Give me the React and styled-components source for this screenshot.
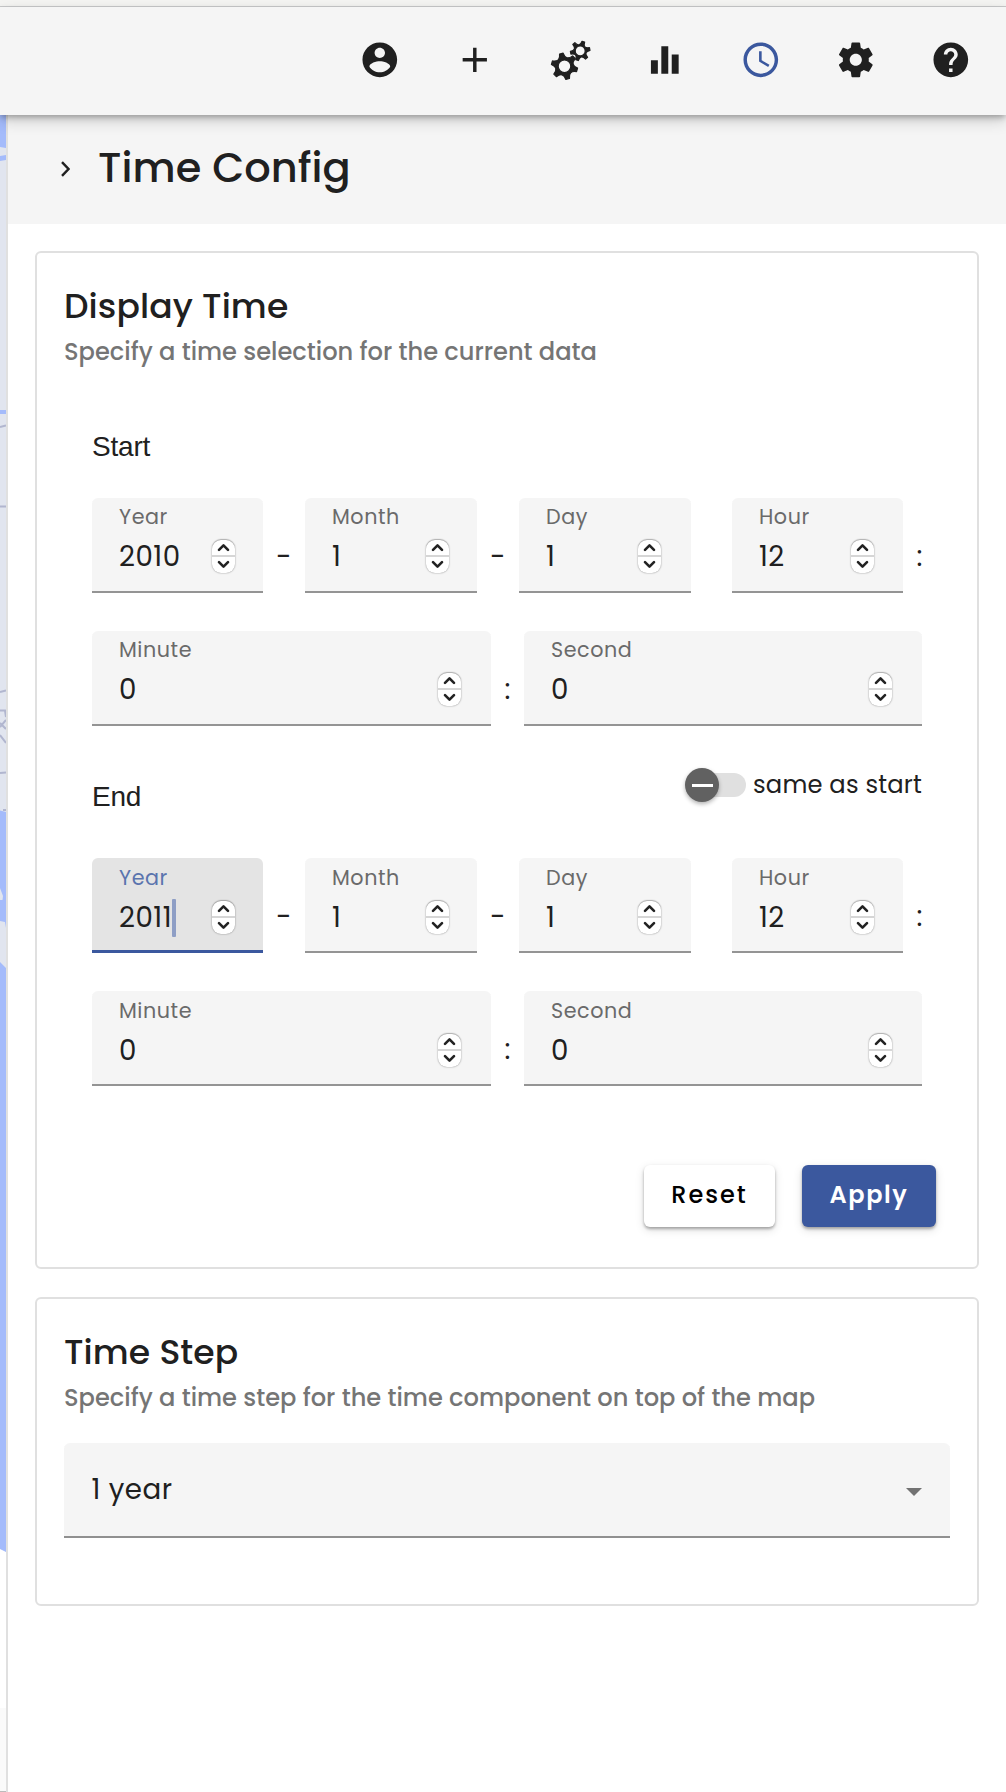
import React from "react";
import styled, { createGlobalStyle, css } from "styled-components";

const sans = `Poppins, Inter, "Liberation Sans", sans-serif`;
const ink = "#202020";
const blue = "#3b589e";

const GlobalStyle = createGlobalStyle`
  *, *::before, *::after { box-sizing: border-box; }
  body {
    margin: 0;
    background: #fff;
    color: ${ink};
    font-family: ${sans};
    -webkit-font-smoothing: antialiased;
  }
`;

const Page = styled.div`
  display: flex;
  flex-direction: column;
  width: 1006px;
  height: 1792px;
  overflow: hidden;
`;

const WindowEdge = styled.div`
  flex: none;
  height: 7px;
  background: #f4f4f2;
  border-bottom: 1px solid #c9cacb;
`;

const Toolbar = styled.header`
  position: relative;
  z-index: 2;
  flex: none;
  display: flex;
  justify-content: flex-end;
  align-items: flex-start;
  gap: 53.7px;
  height: 108px;
  padding: 32px 34.2px 0 0;
  background: #f5f5f5;
  box-shadow: 0 3px 6px -1px rgba(0, 0, 0, 0.3), 0 6px 14px rgba(0, 0, 0, 0.16);
`;

const ToolButton = styled.button`
  display: block;
  width: 41.6px;
  height: 41.6px;
  padding: 0;
  border: 0;
  background: none;
  color: ${(p) => (p.$active ? blue : ink)};
  svg { display: block; overflow: visible; }
`;

const Body = styled.div`
  flex: 1;
  display: flex;
  min-height: 0;
`;

const MapStrip = styled.div`
  flex: none;
  width: 6px;
  svg { display: block; }
`;

const Panel = styled.main`
  flex: 1;
  border-left: 2px solid #e0e0e0;
  background: #fff;
`;

const PanelHeader = styled.div`
  display: flex;
  align-items: center;
  gap: 28px;
  height: 109px;
  padding: 0 0 0 53px;
  background: #f5f5f5;
  svg { display: block; margin-top: -2px; }
`;

const PanelTitle = styled.h1`
  margin: 0;
  padding-bottom: 3px;
  font-size: 41.5px;
  line-height: 48px;
  font-weight: 500;
  letter-spacing: 0.05px;
`;

const Cards = styled.div`
  display: flex;
  flex-direction: column;
  gap: 28px;
  padding: 27px 27px 0;
`;

const Card = styled.section`
  height: ${(p) => p.$height}px;
  padding: 33px 27px 0;
  border: 2px solid #e0e0e0;
  border-radius: 6px;
`;

const CardTitle = styled.h2`
  margin: 0;
  font-size: 34.6px;
  line-height: 40px;
  font-weight: 500;
  letter-spacing: 0.1px;
`;

const CardSubtitle = styled.p`
  margin: 10px 0 0;
  font-size: 24.15px;
  line-height: 32px;
  font-weight: 500;
  white-space: nowrap;
  color: #757575;
`;

const TimeForm = styled.div`
  padding: 63px 0 0 28px;
`;

const GroupLabel = styled.div`
  font-family: "Liberation Sans", Arial, sans-serif;
  font-size: 28px;
  line-height: 32px;
  letter-spacing: -0.2px;
`;

const Rows = styled.div`
  display: flex;
  flex-direction: column;
  gap: 38px;
  padding-top: ${(p) => p.$top || 0}px;
`;

const Row = styled.div`
  display: flex;
  height: 95px;
`;

const Separator = styled.span`
  flex: none;
  width: ${(p) => p.$width}px;
  padding-top: 42px;
  font-size: 27.7px;
  line-height: 34px;
  text-align: center;
`;

const FieldBox = styled.label`
  flex: none;
  display: flex;
  flex-direction: column;
  gap: 11px;
  width: ${(p) => p.$width}px;
  padding: ${(p) => p.$drop}px ${(p) => p.$inset}px 0 27px;
  border-radius: 6px 6px 0 0;
  background: #f5f5f5;
  box-shadow: inset 0 -2px 0 #949494;
  ${(p) =>
    p.$focused &&
    css`
      background: #e4e4e4;
      box-shadow: inset 0 -3px 0 ${blue};
    `}
`;

const FieldLabel = styled.span`
  font-size: 20.7px;
  line-height: 24px;
  letter-spacing: 0.55px;
  color: ${(p) => (p.$focused ? "#5a74ae" : "#6a6a6a")};
`;

const ValueRow = styled.span`
  display: flex;
  align-items: center;
  height: 34px;
`;

const Value = styled.span`
  font-size: 27.7px;
  line-height: 34px;
  letter-spacing: 0.5px;
`;

const Caret = styled.i`
  width: 4px;
  height: 38px;
  margin-right: -4px;
  border-radius: 1px;
  background: #8e9ec5;
`;

const Stepper = styled.span`
  display: flex;
  flex-direction: column;
  width: 23px;
  height: 33px;
  margin: 0 0 2px auto;
  border-radius: 9px;
  background: #fff;
  box-shadow: 0 0 2px rgba(0, 0, 0, 0.35), 0 -0.5px 1px rgba(0, 0, 0, 0.2);
`;

const StepHalf = styled.span`
  flex: 1;
  display: flex;
  align-items: center;
  justify-content: center;
  &:first-child {
    border-bottom: 2px solid #d6d6d6;
  }
`;

const EndHeader = styled.div`
  display: flex;
  justify-content: space-between;
  height: 132px;
  width: 830px;
  ${GroupLabel} { padding-top: 55px; }
`;

const SwitchLabel = styled.label`
  display: flex;
  align-items: center;
  gap: 7px;
  height: 34px;
  margin-top: 42px;
  font-size: 24.2px;
  line-height: 34px;
  letter-spacing: 0.2px;
`;

const SwitchTrack = styled.span`
  display: flex;
  align-items: center;
  width: 57px;
  height: 24px;
  margin-left: 4px;
  border-radius: 12px;
  background: #e0e0e0;
`;

const SwitchThumb = styled.span`
  display: flex;
  align-items: center;
  justify-content: center;
  width: 34px;
  height: 34px;
  margin-left: -4px;
  border-radius: 50%;
  background: #616161;
  box-shadow: 0 2px 4px rgba(0, 0, 0, 0.3);
  &::after {
    content: "";
    width: 21px;
    height: 3px;
    background: #fff;
  }
`;

const Actions = styled.div`
  display: flex;
  justify-content: flex-end;
  gap: 27px;
  padding: 79px 14px 0 0;
`;

const Button = styled.button`
  width: ${(p) => p.$width}px;
  height: 62px;
  padding: 0 0 3px;
  border: 0;
  border-radius: 6px;
  background: ${(p) => (p.$primary ? blue : "#fff")};
  color: ${(p) => (p.$primary ? "#fff" : "#000")};
  font: ${(p) => (p.$primary ? 600 : 500)} 24px/34px ${sans};
  letter-spacing: ${(p) => (p.$primary ? 1.6 : 2)}px;
  box-shadow: 0 2px 3px rgba(0, 0, 0, 0.3), 0 3px 10px rgba(0, 0, 0, 0.13);
`;

const Select = styled.div`
  display: flex;
  align-items: center;
  justify-content: space-between;
  width: 886px;
  height: 95px;
  margin-top: 29px;
  padding: 0 28px 2px 27.5px;
  border-radius: 6px 6px 0 0;
  background: #f5f5f5;
  box-shadow: inset 0 -2px 0 #909090;
`;

const SelectArrow = styled.span`
  margin-top: 4px;
  border: 8px solid transparent;
  border-top: 8.5px solid #727272;
  border-bottom: 0;
`;

function gearPath(cx, cy, radius, control, start, halfTip) {
  const at = (deg, r) => {
    const a = (deg * Math.PI) / 180;
    return `${(cx + r * Math.cos(a)).toFixed(2)} ${(cy + r * Math.sin(a)).toFixed(2)}`;
  };
  let d = "";
  for (let i = 0; i < 6; i += 1) {
    const a = start + i * 60;
    d += `${i ? "L" : "M"}${at(a - halfTip, radius)}L${at(a + halfTip, radius)}`;
    d += `Q${at(a + 30, control)} ${at(a + 60 - halfTip, radius)}`;
  }
  return `${d}Z`;
}

function hole(cx, cy, r) {
  return `M${cx - r} ${cy}a${r} ${r} 0 1 0 ${2 * r} 0a${r} ${r} 0 1 0 ${-2 * r} 0Z`;
}

const Icon = ({ d }) => (
  <svg width="41.6" height="41.6" viewBox="0 0 24 24" fill="currentColor" fillRule="evenodd">
    <path d={d} />
  </svg>
);

const GearsIcon = () => (
  <svg
    width="41.6"
    height="41.6"
    viewBox="0 0 41.6 41.6"
    fill="currentColor"
    fillRule="evenodd"
    stroke="currentColor"
    strokeWidth="1.2"
    strokeLinejoin="round"
  >
    <path d={gearPath(15.5, 27.3, 13.2, 5.6, 16, 8) + hole(15.5, 27.3, 6.3)} />
    <path d={gearPath(31.2, 11.9, 9.8, 3.2, -11, 8) + hole(31.2, 11.9, 5)} />
  </svg>
);

const tools = [
  {
    name: "account",
    d: "M12 2C6.48 2 2 6.48 2 12s4.48 10 10 10 10-4.48 10-10S17.52 2 12 2zm0 3c1.66 0 3 1.34 3 3s-1.34 3-3 3-3-1.34-3-3 1.34-3 3-3zm0 14.2c-2.5 0-4.71-1.28-6-3.22.03-1.99 4-3.08 6-3.08 1.99 0 5.97 1.09 6 3.08-1.29 1.94-3.5 3.22-6 3.22z",
  },
  { name: "add", d: "M19 13h-6v6h-2v-6H5v-2h6V5h2v6h6v2z" },
  { name: "operators" },
  { name: "plot", d: "M4 12.2h4V20H4zM10 4.2h4V20h-4zM16 9h4v11h-4z" },
  {
    name: "time",
    active: true,
    d: "M11.99 2C6.47 2 2 6.48 2 12s4.47 10 9.99 10C17.52 22 22 17.52 22 12S17.52 2 11.99 2zM12 20c-4.42 0-8-3.58-8-8s3.58-8 8-8 8 3.58 8 8-3.58 8-8 8zM12.5 7H11v6l5.25 3.15.75-1.23-4.5-2.67z",
  },
  {
    name: "settings",
    d: "M19.43 12.98c.04-.32.07-.64.07-.98s-.03-.66-.07-.98l2.11-1.65c.19-.15.24-.42.12-.64l-2-3.46c-.12-.22-.39-.3-.61-.22l-2.49 1c-.52-.4-1.08-.73-1.69-.98l-.38-2.65C14.46 2.18 14.25 2 14 2h-4c-.25 0-.46.18-.49.42l-.38 2.65c-.61.25-1.17.59-1.69.98l-2.49-1c-.23-.09-.49 0-.61.22l-2 3.46c-.13.22-.07.49.12.64l2.11 1.65c-.04.32-.07.65-.07.98s.03.66.07.98l-2.11 1.65c-.19.15-.24.42-.12.64l2 3.46c.12.22.39.3.61.22l2.49-1c.52.4 1.08.73 1.69.98l.38 2.65c.03.24.24.42.49.42h4c.25 0 .46-.18.49-.42l.38-2.65c.61-.25 1.17-.59 1.69-.98l2.49 1c.23.09.49 0 .61-.22l2-3.46c.12-.22.07-.49-.12-.64l-2.11-1.65zM12 15.5c-1.93 0-3.5-1.57-3.5-3.5s1.57-3.5 3.5-3.5 3.5 1.57 3.5 3.5-1.57 3.5-3.5 3.5z",
  },
  {
    name: "help",
    d: "M12 2C6.48 2 2 6.48 2 12s4.48 10 10 10 10-4.48 10-10S17.52 2 12 2zm1 17h-2v-2h2v2zm2.07-7.75l-.9.92C13.45 12.9 13 13.5 13 15h-2v-.5c0-1.1.45-2.1 1.17-2.83l1.24-1.26c.37-.36.59-.86.59-1.41 0-1.1-.9-2-2-2s-2 .9-2 2H8c0-2.21 1.79-4 4-4s4 1.79 4 4c0 .88-.36 1.68-.93 2.25z",
  },
];

const MapSliver = () => (
  <svg width="6" height="1677" viewBox="0 115 6 1677" preserveAspectRatio="none">
    <rect y="115" width="6" height="860" fill="#e1e5ef" />
    <path d="M0 115H6V148L0 147Z M0 156L6 155V160L0 161Z M0 410H6V414H0Z" fill="#a4bbfb" />
    <g stroke="#b1b6cf" strokeWidth="2" fill="none">
      <path d="M0 427L6 425.5M0 506.5H6M0 692L6 690.5M0 710.5H5L6 717M0 727L6 720M0 723L6 729M0 735L6 743M0 773L6 772.5M3 810H6" />
    </g>
    <path d="M0 810.5L6 812V1552L0 1549Z" fill="#a4bbfb" />
    <path d="M0 888L3 896L2.5 900H0ZM0 921L5 922L6 928V968L0 962Z" fill="#e1e5ef" />
    <rect y="1708" width="6" height="84" fill="#fafafa" />
    <rect y="1791" width="6" height="1" fill="#bbb" />
  </svg>
);

const StepChevron = ({ up }) => (
  <svg width="13" height="9" viewBox="0 0 13 9" fill="none" stroke="#222" strokeWidth="2.6" strokeLinecap="round" strokeLinejoin="round">
    <path d={up ? "M2 6.8L6.5 2.3L11 6.8" : "M2 2.2L6.5 6.7L11 2.2"} />
  </svg>
);

const Field = ({ label, value, width, inset, drop, focused }) => (
  <FieldBox $width={width} $inset={inset} $drop={drop} $focused={focused}>
    <FieldLabel $focused={focused}>{label}</FieldLabel>
    <ValueRow>
      <Value>{value}</Value>
      {focused && <Caret />}
      <Stepper>
        <StepHalf><StepChevron up /></StepHalf>
        <StepHalf><StepChevron /></StepHalf>
      </Stepper>
    </ValueRow>
  </FieldBox>
);

const TimeFields = ({ year, focused, top, drop }) => (
  <Rows $top={top}>
    <Row>
      <Field label="Year" value={year} width={171} inset={28.5} drop={drop} focused={focused} />
      <Separator $width={42}>-</Separator>
      <Field label="Month" value="1" width={172} inset={28.5} drop={drop} />
      <Separator $width={42}>-</Separator>
      <Field label="Day" value="1" width={172} inset={30} drop={drop} />
      <Separator $width={41} />
      <Field label="Hour" value="12" width={171} inset={29.5} drop={drop} />
      <Separator $width={33}>:</Separator>
    </Row>
    <Row>
      <Field label="Minute" value="0" width={399} inset={30.5} drop={drop} />
      <Separator $width={33}>:</Separator>
      <Field label="Second" value="0" width={398} inset={30.5} drop={drop} />
    </Row>
  </Rows>
);

export default function App() {
  return (
    <Page>
      <GlobalStyle />
      <WindowEdge />
      <Toolbar>
        {tools.map((t) => (
          <ToolButton key={t.name} aria-label={t.name} $active={t.active}>
            {t.d ? <Icon d={t.d} /> : <GearsIcon />}
          </ToolButton>
        ))}
      </Toolbar>
      <Body>
        <MapStrip><MapSliver /></MapStrip>
        <Panel>
          <PanelHeader>
            <svg width="9" height="16" viewBox="0 0 9 16" fill="none" stroke={ink} strokeWidth="2.4">
              <path d="M1 1.2L7.5 8L1 14.8" />
            </svg>
            <PanelTitle>Time Config</PanelTitle>
          </PanelHeader>
          <Cards>
            <Card $height={1018}>
              <CardTitle>Display Time</CardTitle>
              <CardSubtitle>Specify a time selection for the current data</CardSubtitle>
              <TimeForm>
                <GroupLabel>Start</GroupLabel>
                <TimeFields year="2010" top={35} drop={7} />
                <EndHeader>
                  <GroupLabel>End</GroupLabel>
                  <SwitchLabel>
                    <SwitchTrack><SwitchThumb /></SwitchTrack>
                    same as start
                  </SwitchLabel>
                </EndHeader>
                <TimeFields year="2011" drop={8} focused />
              </TimeForm>
              <Actions>
                <Button $width={131}>Reset</Button>
                <Button $width={134} $primary>Apply</Button>
              </Actions>
            </Card>
            <Card $height={309}>
              <CardTitle>Time Step</CardTitle>
              <CardSubtitle>Specify a time step for the time component on top of the map</CardSubtitle>
              <Select>
                <Value>1 year</Value>
                <SelectArrow />
              </Select>
            </Card>
          </Cards>
        </Panel>
      </Body>
    </Page>
  );
}
